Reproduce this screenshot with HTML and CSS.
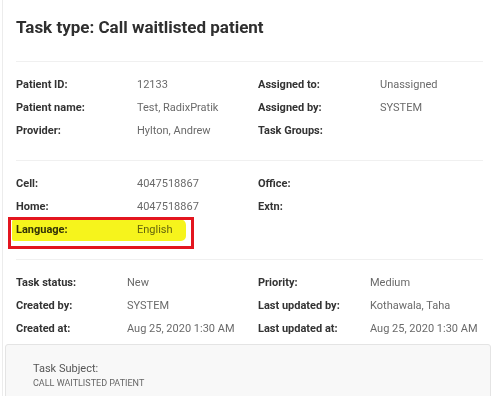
FILE: index.html
```html
<!DOCTYPE html>
<html lang="en">
<head>
    <meta charset="UTF-8">
    <meta name="viewport" content="width=device-width, initial-scale=1.0">
    <title>Task details</title>
    <link rel="stylesheet" href="styles.css">
</head>
<body>
    <div class="page">
        <h1 class="task-title">Task type: Call waitlisted patient</h1>

        <div class="section cols-wide">
            <div class="label">Patient ID:</div>
            <div class="value">12133</div>
            <div class="label">Assigned to:</div>
            <div class="value">Unassigned</div>

            <div class="label">Patient name:</div>
            <div class="value">Test, RadixPratik</div>
            <div class="label">Assigned by:</div>
            <div class="value">SYSTEM</div>

            <div class="label">Provider:</div>
            <div class="value">Hylton, Andrew</div>
            <div class="label">Task Groups:</div>
            <div class="value"></div>
        </div>

        <div class="section cols-wide contact">
            <div class="label">Cell:</div>
            <div class="value">4047518867</div>
            <div class="label">Office:</div>
            <div class="value"></div>

            <div class="label">Home:</div>
            <div class="value">4047518867</div>
            <div class="label">Extn:</div>
            <div class="value"></div>

            <div class="label">Language:</div>
            <div class="value">English</div>
            <div class="label"></div>
            <div class="value"></div>

            <div class="highlight"></div>
            <div class="red-box"></div>
        </div>

        <div class="section cols-narrow last">
            <div class="label">Task status:</div>
            <div class="value">New</div>
            <div class="label">Priority:</div>
            <div class="value">Medium</div>

            <div class="label">Created by:</div>
            <div class="value">SYSTEM</div>
            <div class="label">Last updated by:</div>
            <div class="value">Kothawala, Taha</div>

            <div class="label">Created at:</div>
            <div class="value">Aug 25, 2020 1:30 AM</div>
            <div class="label">Last updated at:</div>
            <div class="value">Aug 25, 2020 1:30 AM</div>
        </div>

        <div class="subject-box">
            <div class="subject-label">Task Subject:</div>
            <div class="subject-text">CALL WAITLISTED PATIENT</div>
        </div>
    </div>
</body>
</html>
```

FILE: styles.css
```css
body {
    font-family: Roboto, "Liberation Sans", Arial, sans-serif;
    margin: 0;
    padding: 0 0 0 2px;
    background-color: #ffffff;
    color: #333333;
    overflow: hidden;
}
.page {
    border-left: 1px solid #ececec;
    padding: 0 13px 0 13px;
    height: 396px;
    overflow: hidden;
}
.task-title {
    margin: 0;
    padding: 16px 0 0 0;
    height: 62px;
    box-sizing: border-box;
    font-size: 17px;
    font-weight: 700;
    line-height: 22px;
    color: #2f2f2f;
    border-bottom: 1px solid #f0f0f0;
    margin-right: -3px;
}
.section {
    display: grid;
    grid-auto-rows: 23px;
    align-items: center;
    padding: 11px 0 18px 0;
    border-bottom: 1px solid #f0f0f0;
    margin-right: -3px;
    font-size: 11px;
    position: relative;
}
.cols-wide {
    grid-template-columns: 121px 121px 122px 1fr;
}
.cols-narrow {
    grid-template-columns: 111px 131px 112px 1fr;
}
.section.last {
    border-bottom: none;
    padding-bottom: 4px;
}
.label {
    font-weight: 700;
    color: #333333;
}
.value {
    color: #6a6a6a;
}
.highlight {
    position: absolute;
    left: -4px;
    top: 58px;
    width: 174px;
    height: 22px;
    background-color: #f6f41c;
    border-radius: 3px 6px 5px 2px;
    mix-blend-mode: multiply;
}
.red-box {
    position: absolute;
    left: -8px;
    top: 56px;
    width: 186px;
    height: 32px;
    border: 3px solid #e3151f;
    box-sizing: border-box;
}
.subject-box {
    margin: 0 -11px 0 -11px;
    background-color: #f8f8f8;
    border: 1px solid #e4e4e4;
    border-radius: 3px;
    padding: 16px 27px 20px 27px;
    height: 80px;
}
.subject-label {
    font-size: 11px;
    color: #555555;
    line-height: 16px;
}
.subject-text {
    font-size: 9px;
    color: #666666;
    line-height: 13px;
}
```
